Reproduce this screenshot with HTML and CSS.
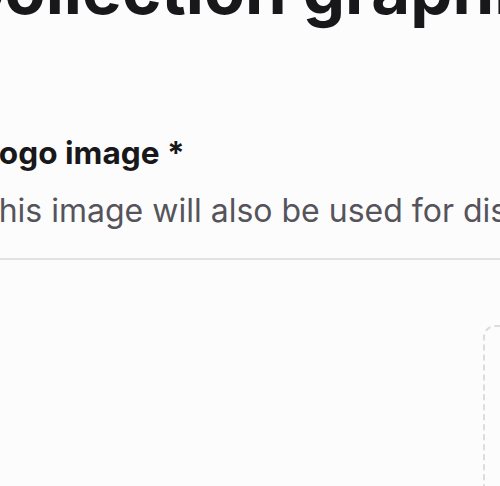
FILE: index.html
```html
<!DOCTYPE html>
<html>
<head>
<meta charset="utf-8">
<link rel="stylesheet" href="styles.css">
</head>
<body>
<main class="page">
  <h1 class="title">Collection graphics</h1>
  <section class="field">
    <h2 class="label">Logo image *</h2>
    <p class="desc">This image will also be used for display purposes</p>
  </section>
  <hr class="divider">
  <div class="upload-row">
    <div class="dropzone"></div>
  </div>
</main>
</body>
</html>
```
FILE: styles.css
```css
html, body {
  margin: 0;
  padding: 0;
  background: #fdfcfd;
  overflow: hidden;
  width: 500px;
  height: 486px;
}
.page {
  margin-left: -19px;
  width: 900px;
  font-family: Inter, "Noto Sans", sans-serif;
  color: #18181b;
}
.title {
  margin: -44px 0 0 -26px;
  font-size: 67px;
  font-weight: 700;
  line-height: 67px;
  white-space: nowrap;
}
.field {
  margin-top: 110px;
}
.label {
  margin: 0;
  font-size: 31.6px;
  font-weight: 700;
  line-height: 40px;
}
.desc {
  margin: 18px 0 0 -3px;
  font-size: 32px;
  font-weight: 400;
  line-height: 40px;
  color: #55545b;
  white-space: nowrap;
}
.divider {
  margin: 27px 0 0 0;
  border: 0;
  height: 2px;
  background: #e2e2e4;
  width: 800px;
}
.upload-row {
  display: flex;
  padding-top: 65px;
  padding-left: 502px;
}
.dropzone {
  width: 300px;
  height: 300px;
  border: 2px dashed #dcdcdf;
  border-radius: 12px;
}
```
